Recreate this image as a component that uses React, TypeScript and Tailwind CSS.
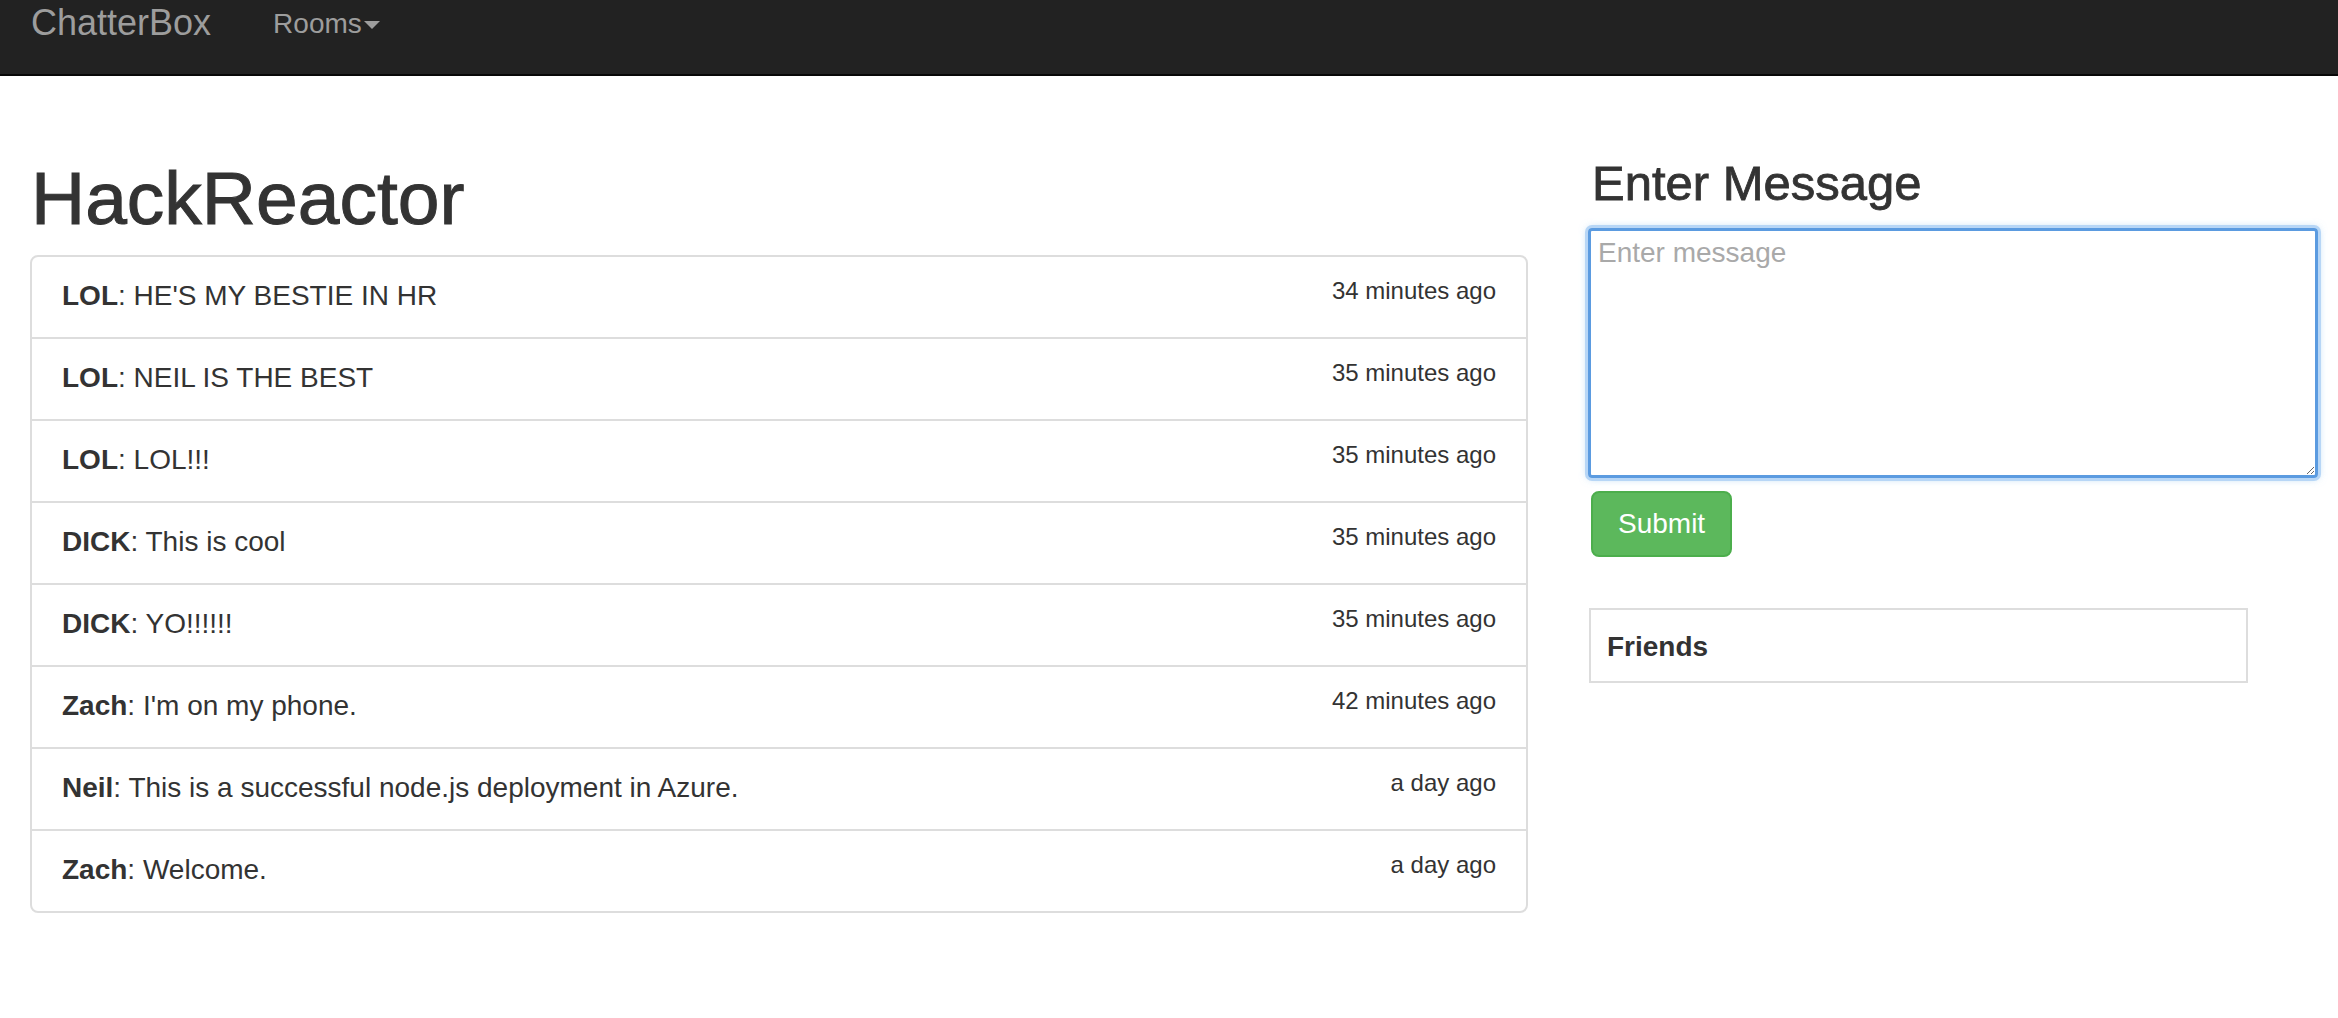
import React from "react";

const messages = [
  { user: "LOL", text: "HE'S MY BESTIE IN HR", time: "34 minutes ago" },
  { user: "LOL", text: "NEIL IS THE BEST", time: "35 minutes ago" },
  { user: "LOL", text: "LOL!!!", time: "35 minutes ago" },
  { user: "DICK", text: "This is cool", time: "35 minutes ago" },
  { user: "DICK", text: "YO!!!!!!", time: "35 minutes ago" },
  { user: "Zach", text: "I'm on my phone.", time: "42 minutes ago" },
  { user: "Neil", text: "This is a successful node.js deployment in Azure.", time: "a day ago" },
  { user: "Zach", text: "Welcome.", time: "a day ago" },
];

function Navbar() {
  return (
    <div className="h-[76px] bg-[#222222] border-b-2 border-[#080808] flex items-start pl-[31px]">
      {/* Brand */}
      <span className="text-[36px] leading-[36px] pt-[5px] text-[#9d9d9d]">ChatterBox</span>
      {/* Rooms dropdown */}
      <div className="flex items-center ml-[62px] pt-[10px] text-[#9d9d9d]">
        <span className="text-[28px] leading-[28px]">Rooms</span>
        <span className="ml-[2px] mt-[2px] w-0 h-0 border-l-[8px] border-r-[8px] border-t-[8px] border-l-transparent border-r-transparent border-t-[#9d9d9d]"></span>
      </div>
    </div>
  );
}

export default function App() {
  return (
    <div className="min-h-[1018px] bg-white text-[#333333] font-['Liberation_Sans',Arial,sans-serif]">
      <Navbar />
      <div className="flex items-start gap-[60px] pl-[30px] pt-[81px]">
        {/* Room + messages */}
        <div className="w-[1498px] shrink-0 flex flex-col">
          <h1 className="text-[75px] leading-[72px] font-medium mt-[5px] mb-[21px] pl-[1px] [-webkit-text-stroke:1px_#333333]">
            HackReactor
          </h1>
          <div className="border-2 border-[#dddddd] rounded-[8px] divide-y-2 divide-[#dddddd]">
            {messages.map((m, i) => (
              <div key={i} className="flex items-start justify-between px-[30px] pt-[19px] pb-[21px]">
                <span className="text-[28px] leading-[40px]">
                  <b className="font-bold">{m.user}</b>: {m.text}
                </span>
                <span className="text-[24px] leading-[30px]">{m.time}</span>
              </div>
            ))}
          </div>
        </div>

        {/* Compose + friends */}
        <div className="w-[730px] shrink-0 flex flex-col">
          <h3 className="text-[49px] leading-[53px] font-medium mb-[18px] pl-[4px] [-webkit-text-stroke:0.8px_#333333]">
            Enter Message
          </h3>
          <textarea
            autoFocus
            placeholder="Enter message"
            className="w-[730px] h-[250px] border-[3px] border-[#5b9be0] rounded-[4px] outline-none px-[7px] pt-[4px] text-[28px] leading-[36px] placeholder:text-[#a9a9a9] shadow-[0_0_0_3px_#b7d6f6,0_0_8px_rgba(102,175,233,0.6)]"
          ></textarea>
          <div className="mt-[13px] pl-[3px]">
            <button className="h-[66px] px-[25px] bg-[#5cb85c] border-2 border-[#4cae4c] rounded-[8px] text-white text-[28px] leading-[40px]">
              Submit
            </button>
          </div>
          <div className="mt-[51px] ml-[1px] w-[659px] border-2 border-[#dddddd] pl-[16px] pt-[17px] pb-[14px]">
            <span className="text-[28px] leading-[40px] font-bold">Friends</span>
          </div>
        </div>
      </div>
    </div>
  );
}
